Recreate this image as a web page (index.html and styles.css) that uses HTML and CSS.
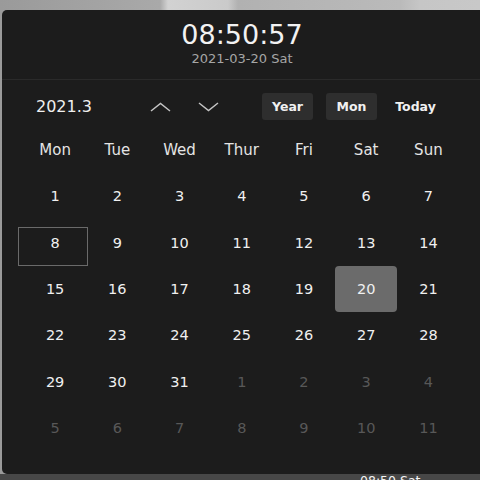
FILE: index.html
```html
<!DOCTYPE html>
<html>

<head>
    <meta name="viewport" content="width=device-width, initial-scale=1">
    <title>
        calendar
    </title>
    <link rel="stylesheet" href="styles.css">
</head>

<body>
    <div class="popup">

        <div class="clock">
            <div class="time">08:50:57</div>
            <div class="date">2021-03-20 Sat</div>
        </div>

        <div class="toolbar">
            <span class="month">2021.3</span>
            <div class="arrows">
                <svg class="arrow" width="21" height="10" viewBox="0 0 21 10">
                    <polyline points="1,9 10.5,1.5 20,9" />
                </svg>
                <svg class="arrow" width="21" height="10" viewBox="0 0 21 10">
                    <polyline points="1,1 10.5,8.5 20,1" />
                </svg>
            </div>
            <div class="modes">
                <button class="mode active">Year</button>
                <button class="mode active">Mon</button>
                <button class="mode">Today</button>
            </div>
        </div>

        <div class="grid" id="grid">
            <div class="weekday">Mon</div>
            <div class="weekday">Tue</div>
            <div class="weekday">Wed</div>
            <div class="weekday">Thur</div>
            <div class="weekday">Fri</div>
            <div class="weekday">Sat</div>
            <div class="weekday">Sun</div>
        </div>

    </div>

    <div class="taskbar">
        <span class="tray-clock">08:50 Sat</span>
    </div>

    <script>
        "use strict";
        // march 2021 starts on a monday, 31 days, then fill with april
        var grid = document.getElementById("grid");
        for (var i = 0; i < 42; i++) {
            var cell = document.createElement("div");
            var day = i + 1;
            cell.className = "day";
            if (day > 31) {
                day = day - 31;
                cell.className += " other";
            }
            if (i == 7) cell.className += " focused";
            if (i == 19) cell.className += " selected";
            cell.textContent = day;
            grid.appendChild(cell);
        }
    </script>
</body>

</html>
```

FILE: styles.css
```css
body {
    margin: 0;
    height: 480px;
    overflow: hidden;
    display: flex;
    flex-direction: column;
    font-family: "DejaVu Sans", sans-serif;
    background: linear-gradient(90deg, #9a9a9a 0, #a9a9a9 160px, #d2d2d2 168px, #cacaca 228px, #b1b1b1 238px, #bababa 400px, #c6c6c6 420px, #c8c8c8 480px);
}

.popup {
    margin: 10px 0 0 2px;
    width: 480px;
    height: 464px;
    flex-shrink: 0;
    background-color: #1c1c1c;
    border-radius: 5px 0 0 5px;
}

.clock {
    box-sizing: border-box;
    height: 70px;
    padding-top: 9px;
    display: flex;
    flex-direction: column;
    align-items: center;
    border-bottom: 1px solid #2a2a2a;
}

.time {
    font-size: 27px;
    line-height: 32px;
    color: #f2f2f2;
}

.date {
    font-size: 13px;
    line-height: 16px;
    color: #a6a6a6;
}

.toolbar {
    display: flex;
    align-items: center;
    padding: 13px 0 7px 34px;
    height: 27px;
}

.month {
    font-size: 16px;
    color: #efefef;
    width: 58px;
}

.arrows {
    display: flex;
    gap: 27px;
    margin-left: 56px;
}

.arrow polyline {
    fill: none;
    stroke: #c4c4c4;
    stroke-width: 1.5;
}

.modes {
    display: flex;
    gap: 13px;
    margin-left: 43px;
}

.mode {
    width: 51px;
    height: 27px;
    padding: 0;
    border: none;
    border-radius: 3px;
    background: none;
    font-family: inherit;
    font-size: 12.5px;
    font-weight: bold;
    color: #f0f0f0;
}

.mode.active {
    background-color: #2e2e2e;
}

.grid {
    display: grid;
    grid-template-columns: repeat(7, 1fr);
    grid-auto-rows: 46.33px;
    padding: 0 22.5px 0 22px;
}

.weekday,
.day {
    display: flex;
    align-items: center;
    justify-content: center;
}

.weekday {
    font-size: 15px;
    color: #e4e4e4;
}

.day {
    position: relative;
    font-size: 14.5px;
    color: #f0f0f0;
    border-radius: 4px;
}

.day.other {
    color: #585858;
}

.day.selected {
    background-color: #6b6b6b;
}

.day.focused:after {
    content: "";
    position: absolute;
    top: 7px;
    bottom: 0;
    left: -6px;
    right: -2px;
    border: 1px solid #6a6a6a;
}

.taskbar {
    flex: 1;
    background-color: #474747;
    padding: 0 0 0 360px;
}

.tray-clock {
    display: block;
    margin-top: -1px;
    font-size: 12.5px;
    color: #f4f4f4;
}
```
